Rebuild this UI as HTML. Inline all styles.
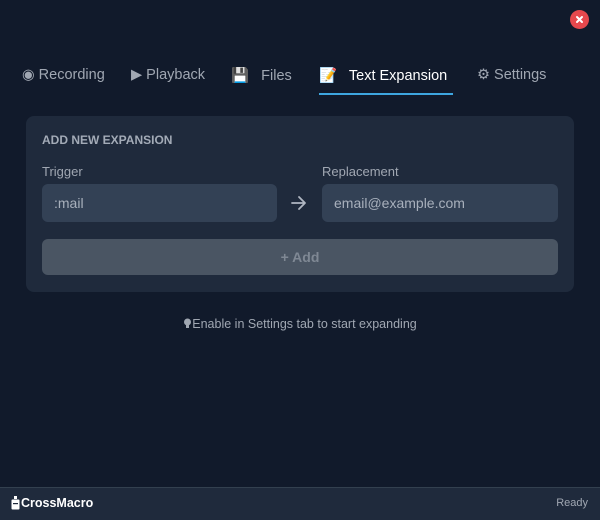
<!DOCTYPE html>
<html><head><style>
*{margin:0;padding:0;box-sizing:border-box}
body{width:600px;height:520px;background:#111a2b;font-family:"Liberation Sans",sans-serif;position:relative;overflow:hidden;color:#9aa3b0}
.close{position:absolute;left:570px;top:10px;width:19px;height:19px;border-radius:50%;background:#e5484d}
.tab{position:absolute;top:67px;font-size:14.5px;color:#a0a7b2;white-space:nowrap}
.ul{position:absolute;left:319px;top:93px;width:134px;height:2px;background:#3ea6e0}
.card{position:absolute;left:26px;top:116px;width:548px;height:176px;background:#1f2a3c;border-radius:8px}
.h{position:absolute;left:42px;top:133px;font-size:12px;font-weight:bold;color:#a3abb7}
.lbl{position:absolute;top:164px;font-size:13px;color:#a0a7b2}
.in{position:absolute;top:184px;height:38px;background:#334155;border-radius:6px;font-size:14px;color:#a8b0bc;padding:11px 12px;line-height:16px}
.btn{position:absolute;left:42px;top:239px;width:516px;height:36px;background:#4a5563;border-radius:6px;text-align:center;line-height:36px;font-size:14px;font-weight:bold;color:#7f8894}
.hint{position:absolute;left:0;width:600px;top:317px;text-align:center;font-size:12.5px;color:#a0a7b2}
.foot{position:absolute;left:0;top:487px;width:600px;height:33px;background:#1f2a3c;border-top:1px solid #33404f}
</style></head><body>
<div class="close"><svg width="19" height="19" viewBox="0 0 19 19"><path d="M7 7L12 12M12 7L7 12" stroke="#fff" stroke-width="2" stroke-linecap="round"/></svg></div>
<div class="tab" style="left:22px">◉ Recording</div>
<div class="tab" style="left:131px">▶ Playback</div>
<div class="tab" style="left:231px">💾&nbsp;&nbsp; Files</div>
<div class="tab" style="left:319px;color:#fff">📝&nbsp;&nbsp; Text Expansion</div>
<div class="tab" style="left:477px">⚙ Settings</div>
<div class="ul"></div>
<div class="card"></div>
<div class="h">ADD NEW EXPANSION</div>
<div class="lbl" style="left:42px">Trigger</div>
<div class="lbl" style="left:322px">Replacement</div>
<div class="in" style="left:42px;width:235px">:mail</div>
<svg style="position:absolute;left:290px;top:195px" width="18" height="16" viewBox="0 0 18 16"><path d="M2 8H15M9 2L15 8L9 14" stroke="#b0b7c2" stroke-width="1.8" fill="none" stroke-linecap="round" stroke-linejoin="round"/></svg>
<div class="in" style="left:322px;width:236px">email@example.com</div>
<div class="btn">+ Add</div>
<div class="hint"><svg width="9" height="11" viewBox="0 0 9 11" style="vertical-align:-1px"><circle cx="4.5" cy="4" r="3.5" fill="#a0a7b2"/><rect x="3" y="7" width="3" height="3" fill="#a0a7b2"/></svg>Enable in Settings tab to start expanding</div>
<div class="foot">
<svg style="position:absolute;left:11px;top:8px" width="9" height="14" viewBox="0 0 9 14"><rect x="3" y="0" width="3" height="3" fill="#fff"/><rect x="0.5" y="3.5" width="8" height="10" rx="1" fill="#fff"/><rect x="2" y="7" width="5" height="1.2" fill="#1f2a3c"/></svg>
<div style="position:absolute;left:21px;top:8px;font-size:12.5px;font-weight:bold;color:#fff">CrossMacro</div>
<div style="position:absolute;right:12px;top:9px;font-size:11px;color:#a0a7b2">Ready</div>
</div>
</body></html>
